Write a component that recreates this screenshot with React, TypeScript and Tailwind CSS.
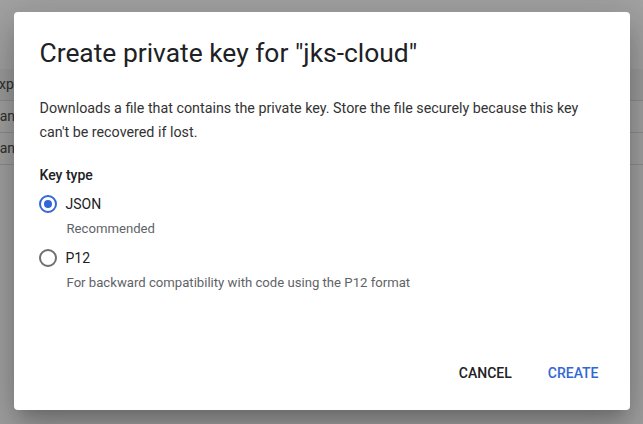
import { useState } from "react";

function Radio({ checked }: { checked: boolean }) {
    return checked ? (
        <span className="w-[18px] h-[18px] rounded-full border-2 border-[#3367d6] flex items-center justify-center shrink-0">
            <span className="w-[8px] h-[8px] rounded-full bg-[#3367d6]" />
        </span>
    ) : (
        <span className="w-[18px] h-[18px] rounded-full border-2 border-[#6f6f6f] shrink-0" />
    );
}

export default function App() {
    const [keyType, setKeyType] = useState("json");

    const options = [
        { id: "json", label: "JSON", hint: "Recommended" },
        { id: "p12", label: "P12", hint: "For backward compatibility with code using the P12 format" },
    ];

    return <div className="relative w-[643px] h-[424px] overflow-hidden bg-[#a2a2a2] font-['Roboto',sans-serif]">
        {/* page behind the overlay */}
        <div className="pt-[69px] text-[14px] text-[#2f2f2f]">
            <div className="h-[32px] bg-[#9c9c9c] border-b border-[#8e8e8e] flex items-center -ml-[9px]">Exp</div>
            <div className="h-[32px] border-b border-[#8e8e8e] flex items-center -ml-[8px]">Jan</div>
            <div className="h-[32px] border-b border-[#8e8e8e] flex items-center -ml-[8px]">Jan</div>
        </div>

        {/* dialog */}
        <div className="absolute inset-0 flex items-start justify-center pt-[12px]">
            <div className="w-[616px] h-[398px] bg-white rounded-[4px] shadow-[0_11px_15px_-7px_rgba(0,0,0,0.2),0_24px_38px_3px_rgba(0,0,0,0.14),0_9px_46px_8px_rgba(0,0,0,0.12)] flex flex-col">
                <div className="pl-[26px] pr-[40px] pt-[25px]">
                    <h2 className="text-[26.4px] leading-[32px] text-[#202124]">Create private key for "jks-cloud"</h2>
                    <p className="mt-[27px] text-[14.3px] leading-[24px] text-[#333]">
                        Downloads a file that contains the private key. Store the file securely because this key can't be recovered if lost.
                    </p>
                    <div className="mt-[21px] text-[14px] leading-[20px] font-medium text-[#202124]">Key type</div>
                    <div className="mt-[7px] flex flex-col gap-[7px]">
                        {options.map((o) => (
                            <label key={o.id} className="flex flex-col cursor-pointer" onClick={() => setKeyType(o.id)}>
                                <div className="h-[24px] flex items-center gap-[9px] -ml-[1px]">
                                    <Radio checked={keyType === o.id} />
                                    <span className="text-[14px] text-[#202124]">{o.label}</span>
                                </div>
                                <div className="mt-[3px] pl-[27px] text-[13.15px] leading-[20px] text-[#5f6368]">{o.hint}</div>
                            </label>
                        ))}
                    </div>
                </div>
                <div className="mt-auto pb-[19px] pr-[15px] flex justify-end gap-[4px]">
                    <button className="h-[36px] px-[16px] text-[14px] font-medium uppercase text-[#202124]">Cancel</button>
                    <button className="h-[36px] px-[16px] text-[14px] font-medium uppercase text-[#3367d6]">Create</button>
                </div>
            </div>
        </div>
    </div>
}
